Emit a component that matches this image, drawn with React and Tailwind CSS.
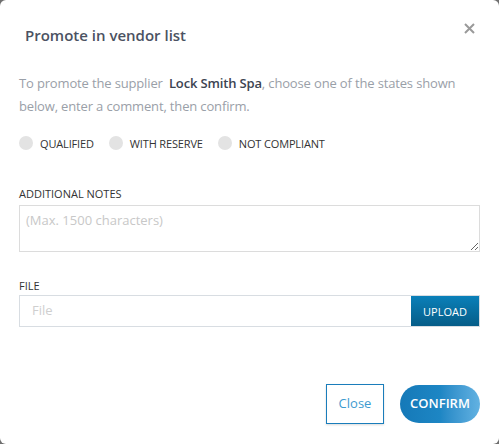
import React from "react";

function Radio({ label }) {
  return (
    <label className="flex items-center gap-[7px]">
      <span className="w-[14px] h-[14px] rounded-full bg-[#e3e3e3] inline-block" />
      <span className="text-[11px] tracking-[-0.15px] text-[#333] leading-none">{label}</span>
    </label>
  );
}

export default function App() {
  return (
    <div className="w-[499px] h-[444px] bg-[#6f6f6f]" style={{ fontFamily: '"Open Sans", sans-serif' }}>
      <div className="w-full h-full bg-white rounded-[6px] flex flex-col px-[19px]">
        <div className="flex justify-between items-start pt-[25px]">
          <h2 className="ml-[6px] text-[15px] leading-[20px] font-semibold text-[#4b5262]">Promote in vendor list</h2>
          <button className="mt-[-2px] mr-[5px] text-[#9a9a9a]">
            <svg width="11" height="11" viewBox="0 0 11 11">
              <path d="M1 1 L10 10 M10 1 L1 10" stroke="#9a9a9a" strokeWidth="2" />
            </svg>
          </button>
        </div>
        <p className="mt-[27px] text-[13px] leading-[23px] text-[#9aa0a8] tracking-[-0.15px]">
          To promote the supplier <b className="ml-[3px] font-semibold text-[#3c4452]">Lock Smith Spa</b>, choose one of the states shown below, enter a comment, then confirm.
        </p>
        <div className="mt-[18px] flex items-center gap-[15px]">
          <Radio label="QUALIFIED" />
          <Radio label="WITH RESERVE" />
          <Radio label="NOT COMPLIANT" />
        </div>
        <div className="mt-[36px] text-[11px] leading-[16px] text-[#333]">ADDITIONAL NOTES</div>
        <textarea
          className="mt-[3px] h-[47px] w-full border border-[#dcdcdc] px-[6px] py-[5px] text-[13px] leading-[18px] text-[#555] placeholder:text-[#c8c8c8] resize-y outline-none"
          placeholder="(Max. 1500 characters)"
        />
        <div className="mt-[26px] text-[11px] leading-[16px] text-[#333]">FILE</div>
        <div className="mt-[1px] flex h-[32px] border border-[#d8dde2]">
          <input
            className="flex-1 px-[12px] text-[13px] text-[#555] placeholder:text-[#cfcfcf] outline-none"
            placeholder="File"
          />
          <button className="w-[68px] h-full bg-gradient-to-b from-[#0a80b9] to-[#065d88] text-white text-[11px] pt-[2px]">UPLOAD</button>
        </div>
        <div className="mt-[57px] flex justify-end items-center gap-[16px]">
          <button className="w-[58px] h-[40px] border border-[#1a7dbb] text-[#3d9bd0] text-[13px] shadow-[0_1px_2px_rgba(0,0,0,0.15)]">Close</button>
          <button className="w-[80px] h-[38px] rounded-full bg-gradient-to-r from-[#1579b8] via-[#1d86c4] to-[#62b2e2] text-white text-[13px] font-semibold">CONFIRM</button>
        </div>
      </div>
    </div>
  );
}
